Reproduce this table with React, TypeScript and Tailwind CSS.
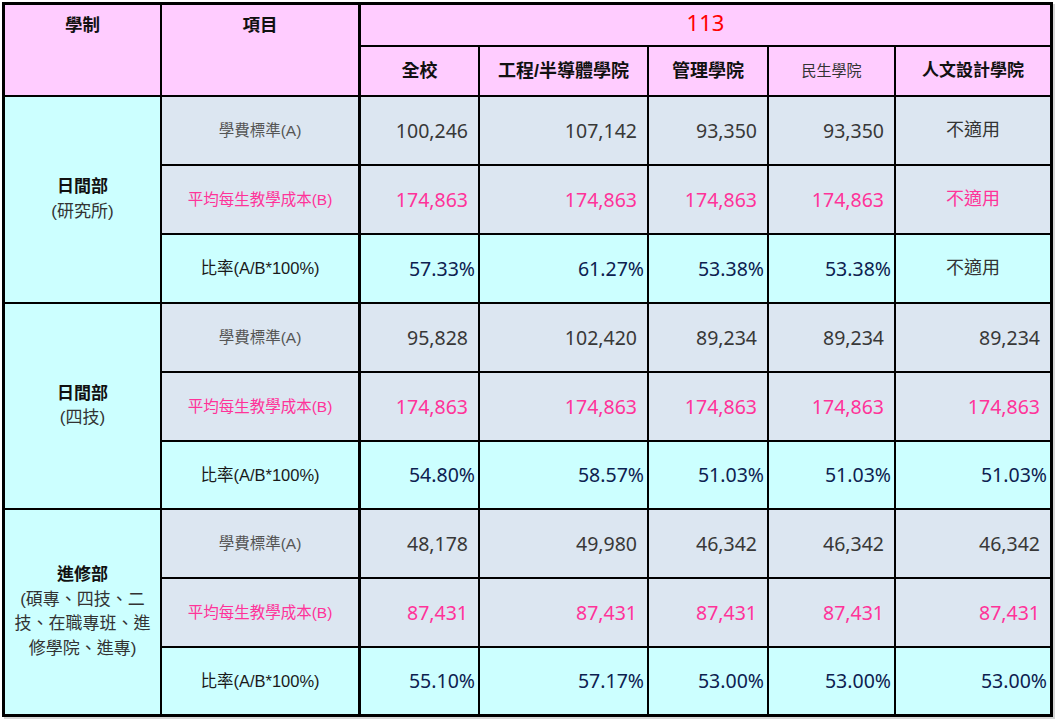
import React from 'react';

type RowKind = 'tuition' | 'cost' | 'ratio';

const COLLEGES = ['全校', '工程/半導體學院', '管理學院', '民生學院', '人文設計學院'];

const GROUPS: {
  title: string;
  sub: string[];
  rows: Record<RowKind, (string | null)[]>;
}[] = [
  {
    title: '日間部',
    sub: ['(研究所)'],
    rows: {
      tuition: ['100,246', '107,142', '93,350', '93,350', null],
      cost: ['174,863', '174,863', '174,863', '174,863', null],
      ratio: ['57.33%', '61.27%', '53.38%', '53.38%', null],
    },
  },
  {
    title: '日間部',
    sub: ['(四技)'],
    rows: {
      tuition: ['95,828', '102,420', '89,234', '89,234', '89,234'],
      cost: ['174,863', '174,863', '174,863', '174,863', '174,863'],
      ratio: ['54.80%', '58.57%', '51.03%', '51.03%', '51.03%'],
    },
  },
  {
    title: '進修部',
    sub: ['(碩專、四技、二', '技、在職專班、進', '修學院、進專)'],
    rows: {
      tuition: ['48,178', '49,980', '46,342', '46,342', '46,342'],
      cost: ['87,431', '87,431', '87,431', '87,431', '87,431'],
      ratio: ['55.10%', '57.17%', '53.00%', '53.00%', '53.00%'],
    },
  },
];

const LABELS: Record<RowKind, string> = {
  tuition: '學費標準(A)',
  cost: '平均每生教學成本(B)',
  ratio: '比率(A/B*100%)',
};

const ROW_BG: Record<RowKind, string> = {
  tuition: 'bg-[#dce6f1]',
  cost: 'bg-[#dce6f1]',
  ratio: 'bg-[#ccffff]',
};

const LABEL_STYLE: Record<RowKind, string> = {
  tuition: 'text-[15.5px] text-[#555555]',
  cost: 'text-[15.5px] text-[#ff3399]',
  ratio: 'text-[16.5px] text-[#1a1a1a]',
};

const VALUE_STYLE: Record<RowKind, string> = {
  tuition: 'text-[#383838] pr-[10px]',
  cost: 'text-[#ff3399] pr-[10px]',
  ratio: 'text-[#0d2150] pr-[3px]',
};

const NA_STYLE: Record<RowKind, string> = {
  tuition: 'text-[#333333]',
  cost: 'text-[#ff3399]',
  ratio: 'text-[#333333]',
};

const cjk = "font-['Liberation_Sans','Noto_Sans_CJK_TC',sans-serif]";
const num = "font-['Noto_Sans','Noto_Sans_CJK_TC',sans-serif]";

export default function App() {
  return (
    <div className="min-h-screen bg-white pl-[2px] pt-[2px]">
      <div className="grid w-fit grid-cols-[155px_196px_118px_167px_118px_125px_154px] grid-rows-[40px_48px_67px_67px_67px_67px_67px_66px_67px_67px_66px] gap-[2px] bg-black p-[3px] shadow-[2px_2px_0_0_#d6d6d6]">
        {/* header */}
        <div className={`row-span-2 flex justify-center bg-[#ffccff] pt-[8px] text-[17.5px] font-bold leading-[24px] text-[#111] ${cjk}`}>
          學制
        </div>
        <div className={`row-span-2 flex justify-center bg-[#ffccff] pt-[8px] text-[17.5px] font-bold leading-[24px] text-[#111] ${cjk}`}>
          項目
        </div>
        <div className={`col-span-5 ml-[1px] flex items-center justify-center bg-[#ffccff] pb-[5px] text-[22px] text-[#ff0000] ${num}`}>
          113
        </div>
        {COLLEGES.map((c, i) => (
          <div
            key={c}
            className={`flex items-center justify-center bg-[#ffccff] ${cjk} ${i === 0 ? 'ml-[1px]' : ''} ${
              i === 3
                ? 'text-[15px] font-normal text-[#333]'
                : i === 4
                ? 'text-[17px] font-bold text-[#111]'
                : 'text-[18px] font-bold text-[#111]'
            }`}
          >
            {c}
          </div>
        ))}

        {/* body */}
        {GROUPS.map((g, gi) => (
          <React.Fragment key={gi}>
            {(['tuition', 'cost', 'ratio'] as RowKind[]).map((kind, ri) => (
              <React.Fragment key={kind}>
                {ri === 0 && (
                  <div className={`row-span-3 flex flex-col items-center justify-center bg-[#ccffff] px-[6px] text-center text-[17px] leading-[24.5px] ${cjk}`}>
                    <span className="font-bold text-[#111]">{g.title}</span>
                    {g.sub.map((s) => (
                      <span key={s} className="whitespace-nowrap text-[#333]">
                        {s}
                      </span>
                    ))}
                  </div>
                )}
                <div className={`flex items-center justify-center ${ROW_BG[kind]} ${LABEL_STYLE[kind]} ${cjk}`}>
                  {LABELS[kind]}
                </div>
                {g.rows[kind].map((v, ci) =>
                  v === null ? (
                    <div
                      key={ci}
                      className={`flex items-center justify-center text-[18px] ${ROW_BG[kind]} ${NA_STYLE[kind]} ${cjk} ${ci === 0 ? 'ml-[1px]' : ''}`}
                    >
                      不適用
                    </div>
                  ) : (
                    <div
                      key={ci}
                      className={`flex items-center justify-end text-[19.5px] ${ROW_BG[kind]} ${VALUE_STYLE[kind]} ${num} ${ci === 0 ? 'ml-[1px]' : ''}`}
                    >
                      {v}
                    </div>
                  )
                )}
              </React.Fragment>
            ))}
          </React.Fragment>
        ))}
      </div>
    </div>
  );
}
